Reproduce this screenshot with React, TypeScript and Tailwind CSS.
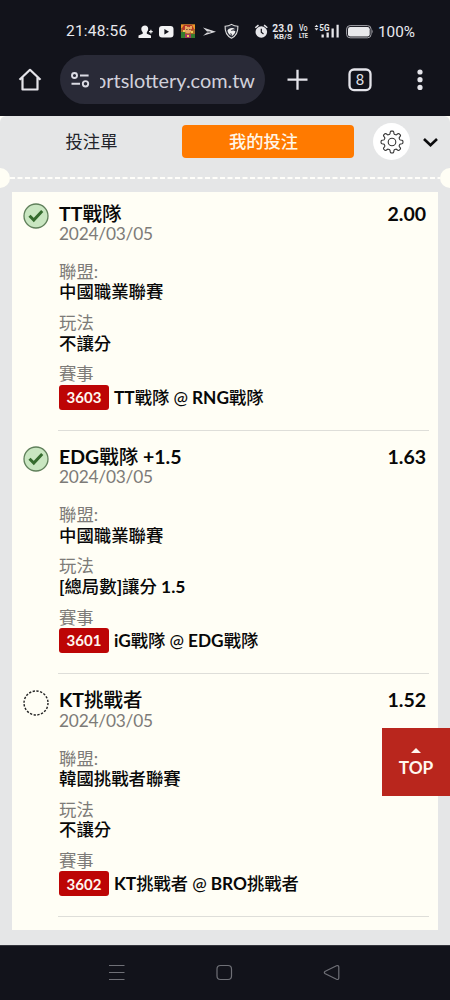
import React from "react";

type Bet = {
  won: boolean;
  title: string;
  odds: string;
  league: string;
  play: string;
  code: string;
  match: string;
};

const bets: Bet[] = [
  { won: true, title: "TT戰隊", odds: "2.00", league: "中國職業聯賽", play: "不讓分", code: "3603", match: "TT戰隊 @ RNG戰隊" },
  { won: true, title: "EDG戰隊 +1.5", odds: "1.63", league: "中國職業聯賽", play: "[總局數]讓分 1.5", code: "3601", match: "iG戰隊 @ EDG戰隊" },
  { won: false, title: "KT挑戰者", odds: "1.52", league: "韓國挑戰者聯賽", play: "不讓分", code: "3602", match: "KT挑戰者 @ BRO挑戰者" },
];

/* Latin runs are bold; Chinese runs and the @ sign take the medium weight. */
function Mixed({ text }: { text: string }) {
  const runs = text.match(/[\u3400-\u9fff]+|\s*@\s*|[^\u3400-\u9fff@]+/g) ?? [];
  return (
    <>
      {runs.map((run, i) => (
        <span key={i} className={/[\u3400-\u9fff]/.test(run) ? "font-medium" : run.includes("@") ? "font-medium tracking-[-0.2px]" : "font-bold"}>
          {run}
        </span>
      ))}
    </>
  );
}

function StatusBar() {
  return (
    <div className="flex h-[50px] items-center pt-[12px] pl-[66px] font-['Roboto','Noto_Sans_CJK_TC',sans-serif] text-[#e9e9ee]">
      <span className="w-[72px] text-[15.500px] leading-5 tracking-[0.200px] whitespace-nowrap">21:48:56</span>
      <svg className="h-5 w-[104px] shrink-0" viewBox="138 20 104 20">
        <g fill="#f2f2f4">
          <path d="M145 24.500c2 0 3.200 1.300 3.200 3.300 0 1.500-.7 2.700-1.400 3.400v1.600l4.200 1.800v2.400h-12.500v-2.400l4.200-1.800v-1.600c-.8-.7-1.400-1.900-1.400-3.400 0-2 1.700-3.300 3.700-3.300z" />
          <path d="M149 30h1.300v-1.300h1.200V30h1.200v1.300h-1.200v1.300h-1.200v-1.300H149z" />
          <rect x="159" y="25" width="14.500" height="11.500" rx="3" />
        </g>
        <path d="M164.400 28v5.400l4.600-2.700z" fill="#11121a" />
        <rect x="181" y="23" width="14" height="14" fill="#a86b27" />
        <path d="M181 24h4v3h-4zm10 0h4v4h-4z" fill="#e99826" />
        <path d="M184 24h8l2 4-3 2h-8l-1-3z" fill="#b53427" />
        <circle cx="188" cy="29" r="3.200" fill="#e9a66b" />
        <path d="M185 25h2v2h3v-2h2v3h-7z" fill="#e8a85a" />
        <path d="M181 31h4v6h-4zm10 2h4v4h-4z" fill="#357c30" />
        <path d="M185 33h6v4h-6z" fill="#a33863" />
        <path d="M183 29h2v2h-2zm8 1h2v2h-2zm-4 4h2v2h-2z" fill="#f0ce58" />
        <path d="M186.400 28h1v1h-1zm3 0h1v1h-1z" fill="#311f1b" />
        <path d="M203 26.500l13 4.200-13 4 4-3.300h3.500v-1H207z" fill="#d8d8dc" />
        <path d="M231.500 23.400c2 1.300 4 1.800 6.400 1.800.3 6-1.800 9.700-6.400 12-4.600-2.300-6.700-6-6.400-12 2.400 0 4.400-.5 6.400-1.800z" fill="#222530" stroke="#ddd" strokeWidth="1.100" />
        <path d="M227.500 29.500c1-2.600 5.500-3.400 7.600-1.200-2.500-.5-4 .4-4.300 1.800 1.200-1 3.600-.9 4.600.4-.3 2-2.100 4-4 4.800.9-1.500.3-2.700-1-3.200-.1 1 .2 1.700.7 2.400-2-.9-3.500-2.700-3.600-5z" fill="#eee" />
      </svg>
      <svg className="ml-[12px] h-5 w-[15px] shrink-0" viewBox="254 20 15 20">
        <circle cx="261.300" cy="31" r="5.800" fill="#e6e6ea" />
        <path d="M255.300 26.800l3.200-2.700m8.800 2.700l-3.200-2.700" stroke="#e6e6ea" strokeWidth="1.500" />
        <path d="M261.300 27.800v3.500l2.200 1.600" fill="none" stroke="#11121a" strokeWidth="1.200" />
      </svg>
      <svg className="ml-[2px] h-5 w-[68px] shrink-0" viewBox="271 20 68 20" fill="#e6e6ea" fontFamily="Roboto, sans-serif">
        <text x="272.300" y="30.500" fontSize="10" fontWeight="700" textLength="20.500" lengthAdjust="spacingAndGlyphs">23.0</text>
        <text x="274" y="37.500" fontSize="7.600" fontWeight="700" textLength="17.800" lengthAdjust="spacingAndGlyphs">KB/S</text>
        <text x="299" y="30" fontSize="8.200" fontWeight="500" textLength="8.500" lengthAdjust="spacingAndGlyphs">Vo</text>
        <text x="299" y="36.700" fontSize="7.800" fontWeight="700" textLength="9" lengthAdjust="spacingAndGlyphs">LTE</text>
        <path d="M316.500 23.700l2 2.200h-4zm0 5.800l2-2.200h-4z" />
        <text x="319.300" y="29.800" fontSize="8.800" fontWeight="700" textLength="10.200" lengthAdjust="spacingAndGlyphs">5G</text>
        <path d="M321.500 33.500h2.300v3h-2.300zm5-2h2.300v5h-2.300zm5-4h2.300v9h-2.300zm5-3.700h2.200v12.700h-2.200z" />
      </svg>
      <svg className="ml-[6px] h-5 w-[28px] shrink-0" viewBox="345 20 28 20">
        <rect x="346.600" y="24.600" width="24.500" height="12.200" rx="3.500" fill="none" stroke="#a5a5ac" strokeWidth="1" />
        <rect x="348" y="26" width="21.700" height="9.400" rx="2.200" fill="#e9e9ec" />
        <path d="M372 28.500q1.200 2 0 4z" fill="#a5a5ac" />
      </svg>
      <span className="mt-[2px] ml-[5px] text-[15.300px] leading-5">100%</span>
    </div>
  );
}

function BrowserBar() {
  return (
    <div className="flex h-[66px] items-start pt-[5px] pl-[16px]">
      <svg className="mt-[10px] h-[30px] w-[28px]" viewBox="16 65 28 30">
        <path d="M19.500 79.800L30 69.800l10.500 10M22.500 77.500v12h15v-12" fill="none" stroke="#e4e4ea" strokeWidth="2.200" strokeLinejoin="round" />
      </svg>
      <div className="ml-[16px] flex h-[49px] w-[205px] items-center rounded-full bg-[#292a37]">
        <svg className="ml-[9px] h-6 w-[23px] shrink-0" viewBox="69 68 23 24" fill="none" stroke="#dbdbe4" strokeWidth="1.900">
          <circle cx="74.500" cy="75.500" r="2.500" />
          <path d="M80 75.500h8.600M71.500 83.800h8.500" />
          <circle cx="85.500" cy="83.800" r="2.700" />
        </svg>
        <div className="ml-[8px] flex w-[155px] justify-end overflow-hidden font-['Lato',sans-serif] text-[19.900px] leading-8 whitespace-nowrap text-[#d0d0da]">
          <span>ortslottery.com.tw</span>
        </div>
      </div>
      <svg className="mt-[10px] ml-[17px] h-[30px] w-[158px]" viewBox="282 65 158 30">
        <path d="M287.500 79.700h20M297.500 69.700v20" stroke="#e4e4ea" strokeWidth="2.300" />
        <rect x="349.500" y="69.500" width="21" height="20.600" rx="4.500" fill="none" stroke="#e4e4ea" strokeWidth="2.300" />
        <text x="360" y="85" textAnchor="middle" fontSize="14.500" fontFamily="Lato, sans-serif" fill="#e4e4ea">8</text>
        <g fill="#e4e4ea">
          <circle cx="420" cy="72" r="2.600" />
          <circle cx="420" cy="79.700" r="2.600" />
          <circle cx="420" cy="87.400" r="2.600" />
        </g>
      </svg>
    </div>
  );
}

function gearPath() {
  const pts: string[] = [];
  for (let i = 0; i < 144; i++) {
    const a = (i / 144) * Math.PI * 2;
    const r = 9.5 + 1.45 * Math.tanh(2.6 * Math.cos(8 * a));
    pts.push(`${(r * Math.sin(a)).toFixed(2)},${(-r * Math.cos(a)).toFixed(2)}`);
  }
  return `M${pts.join("L")}Z`;
}

function Tabs() {
  return (
    <div className="flex h-[52px] items-center pb-[1px] text-[17.300px]">
      <div className="w-[182px] pl-[1px] text-center text-[#22232a]">投注單</div>
      <div className="flex h-[33px] w-[172px] items-center justify-center rounded-[4px] bg-[#ff7a00] pr-[9px] font-medium text-[#fff6e8]">我的投注</div>
      <div className="ml-[19px] flex size-[37px] items-center justify-center rounded-full bg-white">
        <svg className="size-[24px]" viewBox="-12 -12 24 24" fill="none" stroke="#333" strokeWidth="1.100">
          <path d={gearPath()} />
          <circle r="3.800" />
        </svg>
      </div>
      <svg className="mt-[2px] ml-[12px] h-3 w-[17px]" viewBox="0 0 17 12">
        <path d="M2 2l6.500 6.300L15 2" fill="none" stroke="#0b0b0d" strokeWidth="2.600" />
      </svg>
    </div>
  );
}

function StatusMark({ won }: { won: boolean }) {
  return (
    <svg className="mt-[11px] ml-[11px] size-[26px] shrink-0" viewBox="0 0 26 26">
      {won ? (
        <>
          <circle cx="13" cy="13" r="12" fill="#c9e6c1" stroke="#60805b" strokeWidth="1.300" />
          <path d="M6.500 12.700l4.300 4.300 8.400-9" fill="none" stroke="#356b2e" strokeWidth="3" />
        </>
      ) : (
        <circle cx="13" cy="13" r="12" fill="none" stroke="#252525" strokeWidth="1.400" strokeDasharray="2.300 1.470" />
      )}
    </svg>
  );
}

function Field({ label, value }: { label: string; value: string }) {
  return (
    <div className="mb-[10.200px] text-[17.400px] leading-[20.500px]">
      <div className="text-[#7d7b78]">{label}</div>
      <div className="text-[#080808]"><Mixed text={value} /></div>
    </div>
  );
}

function BetRow({ bet }: { bet: Bet }) {
  return (
    <div className="flex h-[243.300px]">
      <StatusMark won={bet.won} />
      <div className="ml-[10px] flex-1 pt-[11.600px]">
        <div className="flex justify-between pr-[12px] text-[19.500px] leading-[20.500px] text-[#080808]">
          <div><Mixed text={bet.title} /></div>
          <div className="font-bold">{bet.odds}</div>
        </div>
        <div className="mb-[17.400px] text-[17.300px] leading-[20.500px] tracking-[-0.200px] text-[#7d7b78]">2024/03/05</div>
        <Field label="聯盟:" value={bet.league} />
        <Field label="玩法" value={bet.play} />
        <div className="text-[17.300px] leading-[20.500px] text-[#7d7b78]">賽事</div>
        <div className="flex items-center">
          <div className="flex h-[25px] w-[50px] items-center justify-center rounded-[3px] bg-[#bd0505] text-[15px] font-bold text-[#fff7ef]">{bet.code}</div>
          <div className="mt-[1px] ml-[5px] text-[17.300px] leading-[20.500px] whitespace-nowrap text-[#080808]"><Mixed text={bet.match} /></div>
        </div>
        <div className="mt-[20px] mr-[9px] -ml-[1px] h-px bg-[#deded9]" />
      </div>
    </div>
  );
}

export default function App() {
  return (
    <div className="relative h-[1000px] w-[450px] overflow-hidden bg-[#12131b] font-['Lato','Noto_Sans_CJK_TC',sans-serif]" lang="zh-Hant">
      <StatusBar />
      <BrowserBar />
      <main className="h-[829px] bg-[#fffef9]">
        <div className="h-full rounded-t-[6px] bg-[#e5e6e7]">
          <Tabs />
          <div className="flex h-[24px] items-start overflow-hidden">
            <div className="-ml-[10px] size-[20px] shrink-0 rounded-full bg-[#fffef5]" />
            <svg className="mt-[8px] h-1 flex-1" viewBox="0 0 430 4" preserveAspectRatio="none">
              <path d="M0 2h430" stroke="#fffefa" strokeWidth="2" strokeDasharray="5 2.500" />
            </svg>
            <div className="-mr-[10px] size-[20px] shrink-0 rounded-full bg-[#fffef5]" />
          </div>
          <div className="mx-[12px] h-[738px] bg-[#fffef5]">
            {bets.map((bet) => <BetRow key={bet.code} bet={bet} />)}
          </div>
        </div>
      </main>
      <nav className="h-[55px] border-t border-[#34353d]">
        <svg className="h-[54px] w-full" viewBox="0 946 450 54" fill="none" stroke="#6f7077" strokeWidth="1.200">
          <path d="M109 965.500h15.500M109 972.500h15.500M109 979.500h15.500" />
          <rect x="217" y="965.500" width="14.500" height="14" rx="3.500" />
          <path d="M325.300 971.300l11.200-5.500q2.300-.8 2.300 1.500v10.500q0 2.300-2.300 1.500l-11.200-5.600q-2-1.200 0-2.400z" />
        </svg>
      </nav>
      <button className="absolute top-[728px] right-0 flex h-[68px] w-[68px] flex-col items-center bg-[#b9261d] pt-[20px] text-[17.300px] leading-[24px] font-bold text-[#fff7ef]">
        <svg className="mb-[3px] h-[5px] w-[10px]" viewBox="0 0 10 5"><path d="M0 5l5-5 5 5z" fill="#fff7ef" /></svg>
        TOP
      </button>
    </div>
  );
}
